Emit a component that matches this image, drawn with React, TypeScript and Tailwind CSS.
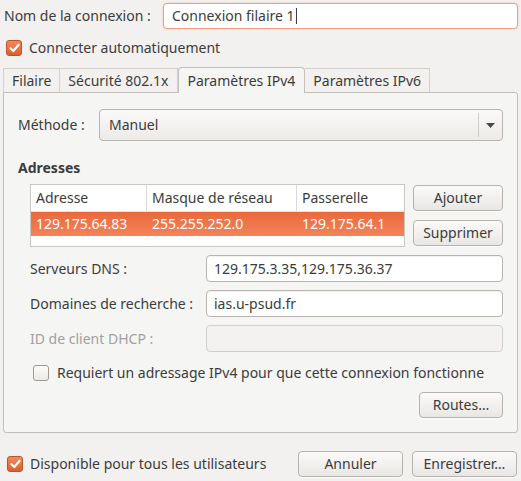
import type { ReactNode } from "react";

// Orange GTK-style checkbox
const Check = ({ checked }: { checked: boolean }) =>
  checked ? (
    <span className="w-[16px] h-[16px] shrink-0 rounded-[3px] border border-[#b8542a] bg-gradient-to-b from-[#f08a5d] to-[#dd5f2c] flex items-center justify-center">
      <svg width="11" height="10" viewBox="0 0 11 10">
        <path d="M1.5 5.2 L4.3 8 L9.6 1.8" fill="none" stroke="#fff" strokeWidth="2.2" strokeLinecap="round" strokeLinejoin="round" />
      </svg>
    </span>
  ) : (
    <span className="w-[16px] h-[16px] shrink-0 rounded-[3px] border border-[#9d9a95] bg-gradient-to-b from-[#fdfdfc] to-[#ebe9e6]" />
  );

const Button = ({ children, className = "" }: { children: ReactNode; className?: string }) => (
  <div
    className={`h-[26px] rounded-[4px] border border-[#b6b3ae] bg-gradient-to-b from-[#fbfaf9] to-[#e9e7e4] shadow-[0_1px_0_rgba(255,255,255,0.8)] flex items-center justify-center ${className}`}
  >
    {children}
  </div>
);

const Field = ({ value, disabled }: { value?: string; disabled?: boolean }) => (
  <div
    className={`flex-1 h-[27px] rounded-[4px] border px-[7px] flex items-center ${
      disabled ? "border-[#d2cfcb] bg-[#f3f2f1]" : "border-[#b8b5b0] bg-white shadow-[inset_0_1px_1px_rgba(0,0,0,0.06)]"
    }`}
  >
    {value}
  </div>
);

const Tab = ({ label, active }: { label: string; active?: boolean }) =>
  active ? (
    <div className="relative z-10 h-[26px] -mb-px px-[9px] flex items-center border border-b-0 border-[#c2bfba] rounded-t-[4px] bg-[#f5f5f4]">
      {label}
    </div>
  ) : (
    <div className="h-[24px] px-[8px] flex items-center border-t border-r border-[#d3d0cc] first:border-l bg-[#f2f1f0]">
      {label}
    </div>
  );

const rows = [{ address: "129.175.64.83", mask: "255.255.252.0", gateway: "129.175.64.1" }];

export default function App() {
  return (
    <div className="w-[521px] h-[481px] overflow-hidden bg-[#f2f1f0] text-[#3c3c3c] text-[14px] leading-none font-['Noto_Sans',sans-serif]">
      {/* Nom de la connexion */}
      <div className="flex items-center h-[26px] mt-[3px] pl-[4px] pr-[3px]">
        <span className="w-[159px]">Nom de la connexion :</span>
        <div className="flex-1 h-full rounded-[4px] border border-[#eea184] bg-white px-[8px] flex items-center shadow-[0_0_2px_rgba(240,119,70,0.45)]">
          Connexion filaire 1
          <span className="ml-px w-px h-[16px] bg-[#3c3c3c]" />
        </div>
      </div>

      <div className="flex items-center gap-[7px] h-[16px] mt-[11px] pl-[6px]">
        <Check checked />
        <span>Connecter automatiquement</span>
      </div>

      {/* Onglets */}
      <div className="flex items-end h-[25px] mt-[11px] pl-[3px]">
        <Tab label="Filaire" />
        <Tab label="Sécurité 802.1x" />
        <Tab label="Paramètres IPv4" active />
        <Tab label="Paramètres IPv6" />
      </div>

      <div className="mx-[3px] h-[341px] border border-[#c2bfba] rounded-b-[3px] rounded-tr-[3px] bg-[#f5f5f4] flex flex-col">
        {/* Méthode */}
        <div className="flex items-center mt-[16px] pl-[14px] pr-[14px]">
          <span className="w-[81px]">Méthode :</span>
          <div className="flex-1 h-[32px] rounded-[4px] border border-[#b8b5b0] bg-gradient-to-b from-[#fbfaf9] to-[#ecebe8] flex items-center pl-[9px]">
            <span className="flex-1">Manuel</span>
            <span className="w-px h-[24px] bg-[#d0cdc9]" />
            <span className="w-[23px] flex justify-center">
              <svg width="9" height="5" viewBox="0 0 9 5">
                <path d="M0 0 H9 L4.5 5 Z" fill="#4a4a4a" />
              </svg>
            </span>
          </div>
        </div>

        <div className="mt-[19px] pl-[14px] h-[16px] flex items-center font-bold">Adresses</div>

        {/* Table des adresses */}
        <div className="flex mt-[8px] pl-[26px] pr-[14px] gap-[8px]">
          <div className="w-[375px] h-[63px] border border-[#c9c6c2] bg-white">
            <div className="flex h-[27px] items-center border-b border-[#e4e2df]">
              <span className="w-[116px] h-full px-[5px] flex items-center border-r border-[#dcdad7]">Adresse</span>
              <span className="w-[150px] h-full px-[5px] flex items-center border-r border-[#dcdad7]">Masque de réseau</span>
              <span className="flex-1 px-[5px]">Passerelle</span>
            </div>
            {rows.map((r) => (
              <div key={r.address} className="flex h-[24px] items-center text-white bg-gradient-to-b from-[#ea683a] to-[#f3845a]">
                <span className="w-[116px] px-[5px]">{r.address}</span>
                <span className="w-[150px] px-[5px]">{r.mask}</span>
                <span className="flex-1 px-[5px]">{r.gateway}</span>
              </div>
            ))}
          </div>
          <div className="flex flex-col gap-[9px] w-[90px] pt-px">
            <Button>Ajouter</Button>
            <Button>Supprimer</Button>
          </div>
        </div>

        {/* DNS / domaines / DHCP */}
        <div className="flex flex-col gap-[8px] mt-[8px] pl-[26px] pr-[14px]">
          <div className="flex items-center">
            <span className="w-[176px]">Serveurs DNS :</span>
            <Field value="129.175.3.35,129.175.36.37" />
          </div>
          <div className="flex items-center">
            <span className="w-[176px]">Domaines de recherche :</span>
            <Field value="ias.u-psud.fr" />
          </div>
          <div className="flex items-center">
            <span className="w-[176px] text-[#a3a19d]">ID de client DHCP :</span>
            <Field disabled />
          </div>
        </div>

        <div className="flex items-center gap-[8px] h-[16px] mt-[13px] pl-[29px]">
          <Check checked={false} />
          <span>Requiert un adressage IPv4 pour que cette connexion fonctionne</span>
        </div>

        <div className="flex justify-end mt-[11px] pr-[14px]">
          <Button className="w-[84px]">Routes…</Button>
        </div>
      </div>

      {/* Pied */}
      <div className="flex items-center mt-[18px] pl-[7px] pr-[4px]">
        <Check checked />
        <span className="ml-[7px] flex-1">Disponible pour tous les utilisateurs</span>
        <div className="flex gap-[9px]">
          <Button className="w-[105px]">Annuler</Button>
          <Button className="w-[105px]">Enregistrer…</Button>
        </div>
      </div>
    </div>
  );
}
